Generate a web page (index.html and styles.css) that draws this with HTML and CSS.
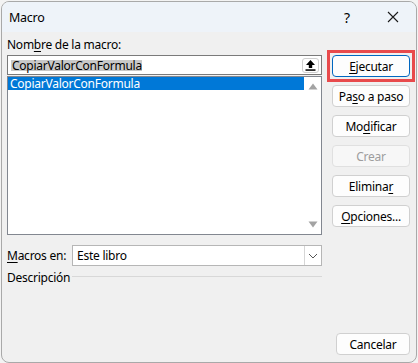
FILE: index.html
```html
<!DOCTYPE html>
<html lang="es">
<head>
  <meta charset="UTF-8" />
  <title>Macro</title>
  <link rel="stylesheet" href="styles.css">
</head>
<body>
  <div class="window">
    <div class="titlebar">
      <span class="title">Macro</span>
      <div class="caption-btns">
        <span class="cap-btn help">?</span>
        <span class="cap-btn close">
          <svg width="12" height="12" viewBox="0 0 12 12"><path d="M1 1 L11 11 M11 1 L1 11" stroke="#1a1a1a" stroke-width="1.1" fill="none"/></svg>
        </span>
      </div>
    </div>
    <div class="body">
      <div class="main">
        <div class="left">
          <div class="label">Nom<u>b</u>re de la macro:</div>
          <div class="name-input">
            <span class="sel-text">CopiarValorConFormula</span>
            <span class="up-btn">
              <svg width="11" height="12" viewBox="0 0 11 12"><path d="M5.5 1 L1 6 H3.8 V9 H7.2 V6 H10 Z" fill="#000"/><rect x="0.5" y="10.3" width="10" height="1.5" fill="#000"/></svg>
            </span>
          </div>
          <div class="macro-list">
            <div class="items">
              <div class="item selected">CopiarValorConFormula</div>
            </div>
            <div class="scrollbar">
              <svg width="10" height="7" viewBox="0 0 10 7"><path d="M5 0.5 L9.5 6.5 H0.5 Z" fill="#a3a3a3"/></svg>
              <svg width="10" height="7" viewBox="0 0 10 7"><path d="M5 6.5 L9.5 0.5 H0.5 Z" fill="#a3a3a3"/></svg>
            </div>
          </div>
          <div class="row macros-en">
            <span class="row-label"><u>M</u>acros en:</span>
            <div class="combo">
              <span class="combo-text">Este libro</span>
              <span class="combo-arrow">
                <svg width="10" height="6" viewBox="0 0 10 6"><path d="M1 1 L5 5 L9 1" stroke="#555" stroke-width="1" fill="none"/></svg>
              </span>
            </div>
          </div>
          <div class="row desc">
            <span class="row-label">Descripción</span>
            <span class="desc-line"></span>
          </div>
        </div>
        <div class="right">
          <div class="highlight">
            <button class="btn default"><u>E</u>jecutar</button>
          </div>
          <button class="btn">Pa<u>s</u>o a paso</button>
          <button class="btn">Mo<u>d</u>ificar</button>
          <button class="btn" disabled>Crear</button>
          <button class="btn">Elimina<u>r</u></button>
          <button class="btn"><u>O</u>pciones...</button>
        </div>
      </div>
      <div class="footer">
        <button class="btn cancel">Cancelar</button>
      </div>
    </div>
  </div>
</body>
</html>
```
FILE: styles.css
```css
* {
  box-sizing: border-box;
}
body {
  margin: 0;
  padding: 1px 0 0 1px;
  background: #f3f3f3;
  font-family: "Noto Sans", "Open Sans", sans-serif;
  font-size: 12px;
  letter-spacing: -0.25px;
  color: #000;
}
u {
  text-decoration-thickness: 1px;
  text-underline-offset: 2px;
}
.window {
  width: 416px;
  height: 362px;
  border: 1px solid #a9a9a9;
  border-radius: 8px;
  background: #f0f0f0;
  overflow: hidden;
  display: flex;
  flex-direction: column;
}
.titlebar {
  height: 30px;
  background: #eef3f9;
  display: flex;
  align-items: center;
  justify-content: space-between;
  padding-left: 7px;
  flex-shrink: 0;
}
.title {
  font-size: 12.5px;
}
.caption-btns {
  display: flex;
  height: 100%;
}
.cap-btn {
  width: 46px;
  display: flex;
  align-items: center;
  justify-content: center;
}
.help {
  font-size: 14px;
}
.body {
  flex: 1;
  display: flex;
  flex-direction: column;
  padding: 0 5px 7px 5px;
}
.main {
  display: flex;
  gap: 10px;
}
.left {
  width: 315px;
}
.label {
  height: 16px;
  line-height: 16px;
  margin-top: 5px;
  margin-bottom: 2px;
}
.name-input {
  height: 20px;
  border: 1px solid #7a7a7a;
  background: #fff;
  display: flex;
  align-items: center;
  justify-content: space-between;
  padding: 0 2px 0 3px;
}
.sel-text {
  background: #c8c8c8;
  line-height: 11px;
  height: 11px;
  padding-left: 1px;
}
.up-btn {
  width: 17px;
  height: 15px;
  border: 1px solid #cfcfcf;
  border-radius: 3px;
  background: #fff;
  display: flex;
  align-items: center;
  justify-content: center;
}
.macro-list {
  margin-top: 1px;
  height: 159px;
  border: 1px solid #828790;
  background: #fff;
  display: flex;
}
.items {
  flex: 1;
}
.item {
  height: 13px;
  line-height: 13px;
  padding-left: 2px;
}
.item.selected {
  background: #0078d7;
  color: #fff;
}
.scrollbar {
  width: 17px;
  display: flex;
  flex-direction: column;
  justify-content: space-between;
  align-items: center;
  padding: 6px 0 6px;
}
.row {
  display: flex;
  align-items: center;
}
.row-label {
  width: 65px;
}
.macros-en {
  margin-top: 10px;
}
.combo {
  flex: 1;
  height: 21px;
  border: 1px solid #b6b6b6;
  background: #fff;
  display: flex;
  align-items: center;
  justify-content: space-between;
}
.combo-text {
  padding-left: 4px;
}
.combo-arrow {
  width: 17px;
  height: 100%;
  border-left: 1px solid #d6d6d6;
  display: flex;
  align-items: center;
  justify-content: center;
}
.desc {
  margin-top: 3px;
  height: 17px;
}
.desc-line {
  flex: 1;
  height: 1px;
  background: #d8d8d8;
  margin-top: -3px;
}
.right {
  display: flex;
  flex-direction: column;
  gap: 8px;
  padding-top: 23px;
  width: 78px;
}
.highlight {
  position: relative;
}
.highlight::after {
  content: "";
  position: absolute;
  left: -5px;
  top: -5px;
  right: -5px;
  bottom: -5px;
  border: 3px solid #e84a4c;
  pointer-events: none;
}
.btn {
  display: block;
  height: 22px;
  width: 78px;
  font-family: inherit;
  font-size: 12px;
  letter-spacing: -0.25px;
  color: #000;
  background: #fdfdfd;
  border: 1px solid #d0d0d0;
  border-radius: 4px;
  padding: 0;
}
.btn.default {
  border-color: #0067c0;
}
.btn:disabled {
  color: #9d9d9d;
  border-color: #e0e0e0;
  background: #f7f7f7;
}
.footer {
  margin-top: auto;
  display: flex;
  justify-content: flex-end;
  padding-right: 1px;
}
.btn.cancel {
  width: 74px;
}
```
